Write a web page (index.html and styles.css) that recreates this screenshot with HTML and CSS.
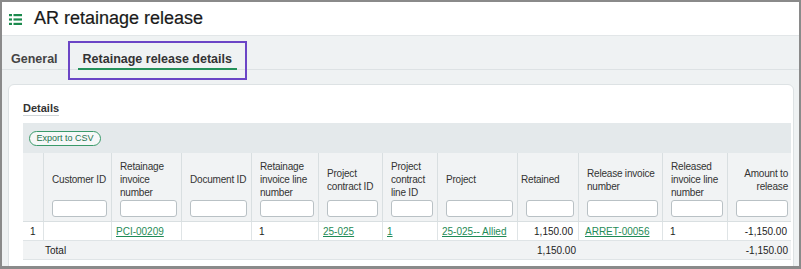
FILE: index.html
```html
<!DOCTYPE html>
<html lang="en">

<head>
    <meta charset="UTF-8">
    <title>AR retainage release</title>
    <link rel="stylesheet" href="styles.css">
</head>

<body>
    <div class="frame">
        <header class="topbar">
            <svg class="menu-icon" width="13" height="11" viewBox="0 0 13 11">
                <rect x="0" y="0" width="3" height="2.2" />
                <rect x="4.5" y="0" width="8.5" height="2.2" />
                <rect x="0" y="4.4" width="3" height="2.2" />
                <rect x="4.5" y="4.4" width="8.5" height="2.2" />
                <rect x="0" y="8.8" width="3" height="2.2" />
                <rect x="4.5" y="8.8" width="8.5" height="2.2" />
            </svg>
            <h1 class="page-title">AR retainage release</h1>
        </header>

        <nav class="tabs">
            <a class="tab">General</a>
            <a class="tab tab-active">Retainage release details</a>
        </nav>

        <section class="card">
            <h2 class="section-title">Details</h2>
            <div class="grid">
                <div class="grid-toolbar">
                    <button class="btn-export">Export to CSV</button>
                </div>
                <div class="grid-scroll">
                    <table class="grid-table">
                        <colgroup>
                            <col style="width: 21px">
                            <col style="width: 68px">
                            <col style="width: 70px">
                            <col style="width: 70px">
                            <col style="width: 67px">
                            <col style="width: 64px">
                            <col style="width: 55px">
                            <col style="width: 80px">
                            <col style="width: 61px">
                            <col style="width: 84px">
                            <col style="width: 65px">
                            <col style="width: 65px">
                        </colgroup>
                        <thead>
                            <tr>
                                <th class="rownum"></th>
                                <th><div class="th-label">Customer ID</div><input class="filter" type="text"></th>
                                <th><div class="th-label">Retainage invoice number</div><input class="filter" type="text"></th>
                                <th><div class="th-label">Document ID</div><input class="filter" type="text"></th>
                                <th><div class="th-label">Retainage invoice line number</div><input class="filter" type="text"></th>
                                <th><div class="th-label">Project contract ID</div><input class="filter" type="text"></th>
                                <th><div class="th-label">Project contract line ID</div><input class="filter" type="text"></th>
                                <th><div class="th-label">Project</div><input class="filter" type="text"></th>
                                <th class="th-tight"><div class="th-label">Retained</div><input class="filter" type="text"></th>
                                <th><div class="th-label">Release invoice number</div><input class="filter" type="text"></th>
                                <th><div class="th-label">Released invoice line number</div><input class="filter" type="text"></th>
                                <th class="num"><div class="th-label">Amount to release</div><input class="filter" type="text"></th>
                            </tr>
                        </thead>
                        <tbody>
                            <tr>
                                <td class="plain">1</td>
                                <td></td>
                                <td><a href="#">PCI-00209</a></td>
                                <td></td>
                                <td class="plain">1</td>
                                <td><a href="#">25-025</a></td>
                                <td><a href="#">1</a></td>
                                <td><a href="#">25-025-- Allied</a></td>
                                <td class="num">1,150.00</td>
                                <td class="link-wide"><a href="#">ARRET-00056</a></td>
                                <td class="plain">1</td>
                                <td class="num">-1,150.00</td>
                            </tr>
                        </tbody>
                        <tfoot>
                            <tr>
                                <td></td>
                                <td class="total-label">Total</td>
                                <td></td>
                                <td></td>
                                <td></td>
                                <td></td>
                                <td></td>
                                <td></td>
                                <td class="num total-num">1,150.00</td>
                                <td></td>
                                <td></td>
                                <td class="num">-1,150.00</td>
                            </tr>
                        </tfoot>
                    </table>
                </div>
            </div>
        </section>
    </div>
</body>

</html>
```

FILE: styles.css
```css
body {
    margin: 0;
    font-family: "Liberation Sans", Arial, sans-serif;
    color: #222;
}

.frame {
    box-sizing: border-box;
    width: 801px;
    height: 269px;
    overflow: hidden;
    border: 2px solid #8a8a8a;
    border-bottom-width: 3px;
    background-color: #eff2f3;
}

.topbar {
    display: flex;
    align-items: center;
    height: 33px;
    padding-left: 7px;
    background-color: #fff;
    border-bottom: 1px solid #e2e6e8;
}

.menu-icon {
    fill: #1b8a4d;
    margin-top: 1px;
}

.page-title {
    margin: 0 0 0 12px;
    font-size: 18px;
    font-weight: normal;
    color: #1a1a1a;
    -webkit-text-stroke: 0.2px #1a1a1a;
}

.tabs {
    display: flex;
    align-items: flex-end;
    gap: 15px;
    height: 33px;
    padding-left: 4px;
    border-bottom: 1px solid #dde2e4;
}

.tab {
    padding: 0 5px 1px;
    margin-bottom: -1px;
    font-size: 12.5px;
    line-height: 16px;
    font-weight: bold;
    color: #444;
    border-bottom: 2px solid transparent;
}

.tab-active {
    color: #333;
    border-bottom-color: #23915a;
    outline: 2px solid #6b45c6;
    outline-offset: 8px;
}

.card {
    margin: 14px 5px 0 6px;
    padding: 17px 2px 0 14px;
    background-color: #fff;
    border: 1px solid #dde2e4;
    border-radius: 6px;
    height: 200px;
}

.section-title {
    display: table;
    margin: 0 0 7px;
    font-size: 11px;
    line-height: 13px;
    font-weight: bold;
    color: #333;
    border-bottom: 1px solid #cfd5d8;
}

.grid-toolbar {
    display: flex;
    align-items: center;
    height: 30px;
    padding-left: 6px;
    background-color: #e4e9eb;
}

.btn-export {
    box-sizing: border-box;
    width: 72px;
    height: 15px;
    padding: 0;
    font-family: inherit;
    font-size: 9px;
    color: #23734d;
    background-color: #f6f8f8;
    border: 1.5px solid #3a9a6a;
    border-radius: 8px;
}

.grid-scroll {
    overflow: hidden;
}

.grid-table {
    table-layout: fixed;
    width: 770px;
    border-collapse: separate;
    border-spacing: 0;
    font-size: 10px;
    line-height: 13px;
}

.grid-table th {
    padding: 7px 4px 4px 8px;
    vertical-align: top;
    text-align: left;
    font-weight: normal;
    letter-spacing: -0.2px;
    color: #333;
    background-color: #f1f3f4;
    border-right: 1px solid #d9dfe1;
    border-bottom: 1px solid #d9dfe1;
}

.th-label {
    display: flex;
    align-items: center;
    height: 39px;
    margin-bottom: 1px;
}

.grid-table th.th-tight {
    padding-left: 3px;
}

.grid-table th.th-tight .filter {
    margin-left: 5px;
    width: calc(100% - 5px);
}

.grid-table th.num .th-label {
    justify-content: flex-end;
    text-align: right;
}

.filter {
    display: block;
    box-sizing: border-box;
    width: 100%;
    height: 17px;
    margin: 0;
    border: 1px solid #b9c1c5;
    border-radius: 3px;
    background-color: #fff;
}

.grid-table td {
    padding: 3px 4px 2px;
    white-space: nowrap;
    color: #222;
    border-right: 1px solid #dfe4e6;
    border-bottom: 1px solid #dfe4e6;
}

.grid-table td.plain {
    padding-left: 7px;
}

.grid-table td.link-wide {
    padding-left: 6px;
}

.grid-table td.num {
    text-align: right;
    padding-right: 5px;
}

.grid-table a {
    color: #1f8b57;
    text-decoration: underline;
}

.grid-table tfoot td {
    border-right: none;
    background-color: #f1f3f4;
}

.grid-table td.total-label {
    padding-left: 1px;
}

.grid-table td.total-num {
    padding-right: 3px;
}
```
